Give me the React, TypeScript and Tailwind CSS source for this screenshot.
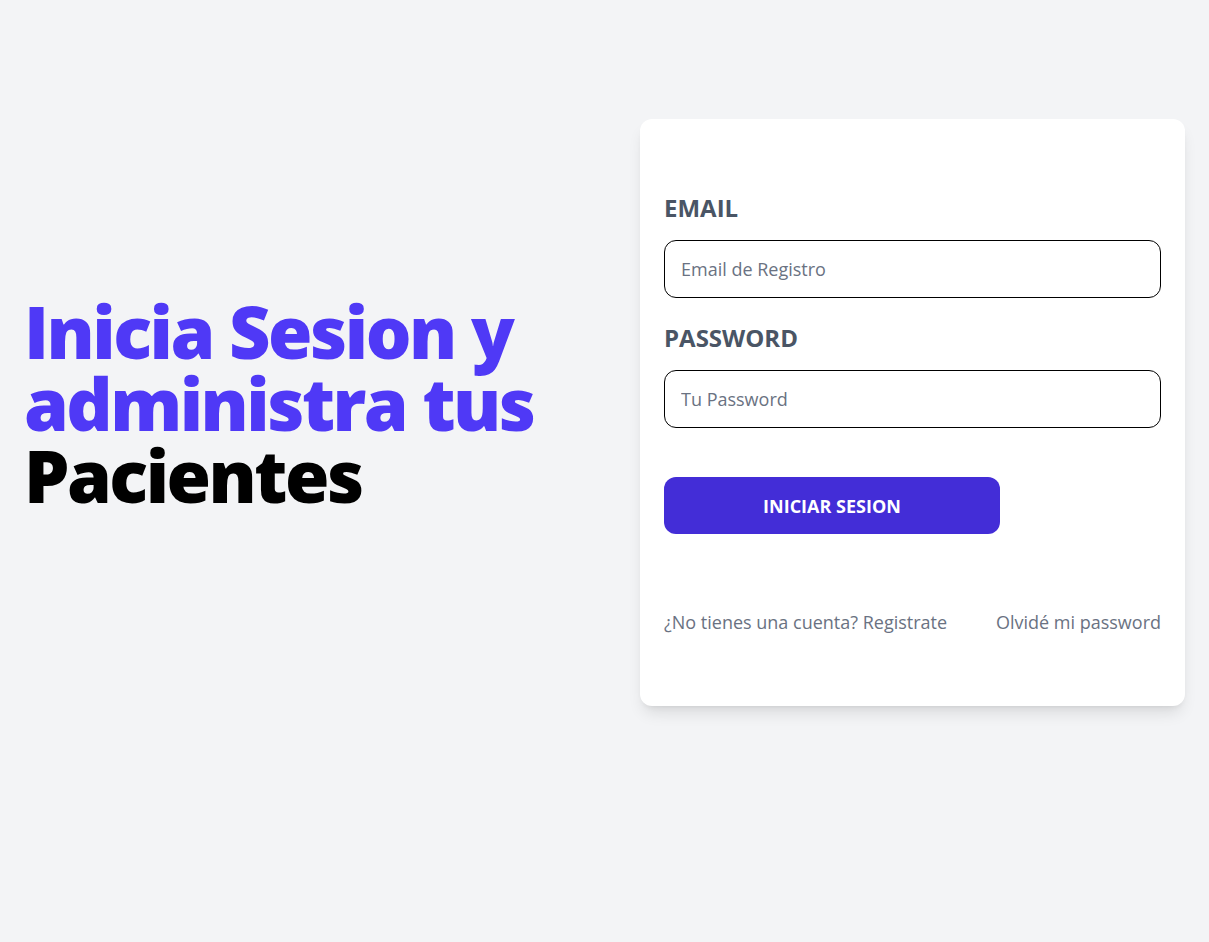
import React from 'react';

const App: React.FC = () => {
  return (
    <main className="min-h-screen bg-gray-100 font-['Open_Sans',sans-serif]">
      <div className="grid grid-cols-2 gap-[71px] px-6 pt-[119px] items-center">
        {/* Left: headline */}
        <div className="mb-[20px]">
          <h1 className="text-indigo-600 font-extrabold text-7xl leading-[72px] tracking-[-2.5px]">
            Inicia Sesion y administra tus <span className="text-black">Pacientes</span>
          </h1>
        </div>

        {/* Right: login card */}
        <div className="bg-white rounded-xl shadow-lg px-6 pt-[73px] pb-[70px]">
          <form>
            <div>
              <label className="block uppercase text-gray-600 text-2xl font-bold leading-8">Email</label>
              <input
                type="email"
                placeholder="Email de Registro"
                className="mt-4 w-full h-[58px] border border-black rounded-xl bg-white px-4 text-lg placeholder:text-gray-500"
              />
            </div>
            <div className="mt-6">
              <label className="block uppercase text-gray-600 text-2xl font-bold leading-8">Password</label>
              <input
                type="password"
                placeholder="Tu Password"
                className="mt-4 w-full h-[58px] border border-black rounded-xl bg-white px-4 text-lg placeholder:text-gray-500"
              />
            </div>
            <button
              type="submit"
              className="mt-[49px] w-[336px] h-[57px] rounded-xl bg-indigo-700 text-white uppercase font-bold text-lg"
            >
              Iniciar Sesion
            </button>
          </form>

          <nav className="mt-[74px] flex justify-between text-lg leading-7 text-gray-500">
            <a href="#">¿No tienes una cuenta? Registrate</a>
            <a href="#">Olvidé mi password</a>
          </nav>
        </div>
      </div>
    </main>
  );
};

export default App;
